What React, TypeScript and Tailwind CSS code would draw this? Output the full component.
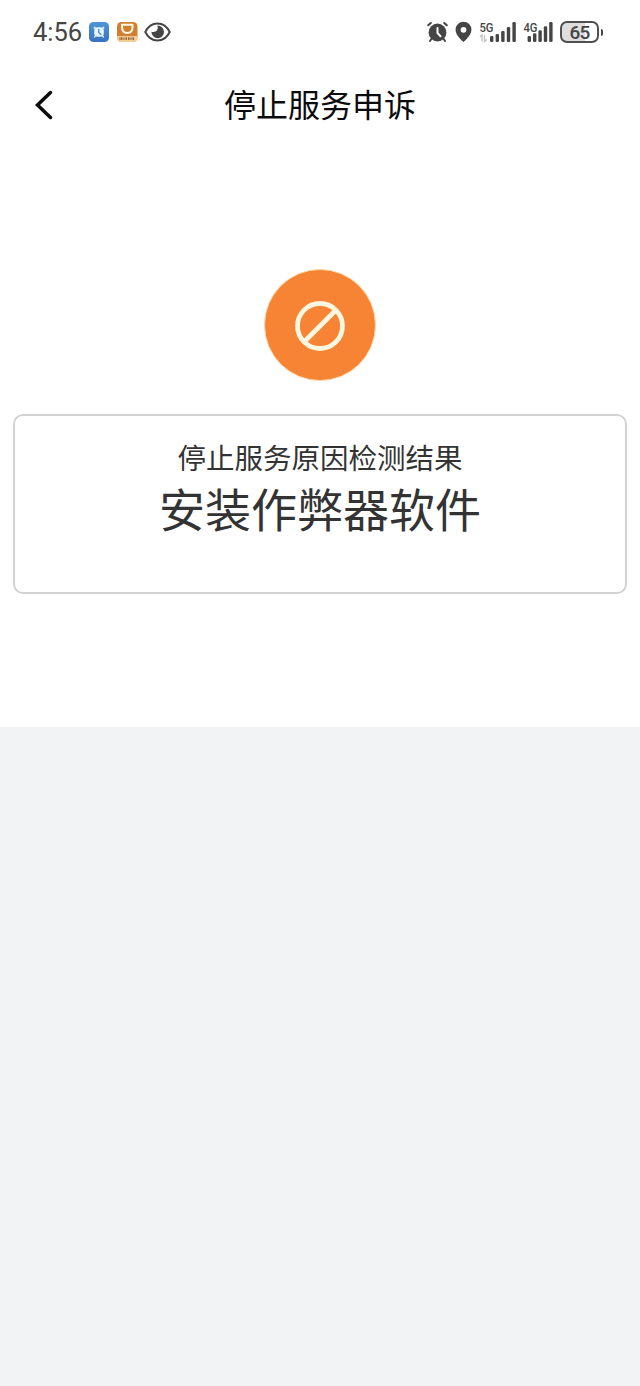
import type { ReactNode } from "react";

const bars5g = [
  { x: 11, y: 15 },
  { x: 16.6, y: 13 },
  { x: 22.2, y: 10 },
  { x: 27.8, y: 6 },
  { x: 33.4, y: 1 },
];

const bars4g = [
  { x: 4.6, y: 15 },
  { x: 10, y: 12.3 },
  { x: 15.4, y: 9.3 },
  { x: 20.8, y: 5.3 },
  { x: 26.2, y: 1 },
];

function Signal({
  label,
  bars,
  width,
  children,
}: {
  label: string;
  bars: { x: number; y: number }[];
  width: number;
  children?: ReactNode;
}) {
  return (
    <svg width={width} height="32" viewBox={`0 -5 ${width} 32`} fill="#454545">
      <text
        x="0.5"
        y="10.5"
        fontSize="13.5"
        fontWeight="500"
        textLength="14"
        lengthAdjust="spacingAndGlyphs"
      >
        {label}
      </text>
      {children}
      {bars.map((bar) => (
        <rect
          key={bar.x}
          x={bar.x}
          y={bar.y}
          width="3.4"
          height={21 - bar.y}
          rx="1.3"
        />
      ))}
    </svg>
  );
}

function ClockAppIcon() {
  return (
    <svg className="ml-[7px]" width="20" height="20" viewBox="0 0 20 20">
      <defs>
        <linearGradient id="clock" x1="0" y1="0" x2="0" y2="1">
          <stop offset="0" stopColor="#4f95d6" />
          <stop offset="1" stopColor="#3871c0" />
        </linearGradient>
      </defs>
      <rect width="20" height="20" rx="4.5" fill="url(#clock)" />
      <rect x="5.2" y="5.2" width="9.6" height="9.6" rx="3.5" fill="#e4f6fb" />
      <path
        d="M5.2 6 6 5.200M14 5.200l.8.8M6 14.600l-.5.500M14 14.600l.5.500"
        stroke="#e4f6fb"
        strokeWidth="1.4"
        strokeLinecap="round"
      />
      <path d="M9.8 7v3.500l2.500 2.200" fill="none" stroke="#4385ca" strokeWidth="1.3" />
    </svg>
  );
}

function CupAppIcon() {
  return (
    <svg className="ml-2" width="21" height="20" viewBox="0 0 21 20">
      <rect width="20.5" height="20" rx="4.5" fill="#d27f2e" />
      <path d="M0 14h20.500v1.500A4.500 4.500 0 0 1 16 20H4.500A4.500 4.500 0 0 1 0 15.500z" fill="#f3cd94" />
      <path
        d="M5 2.800h10.500V5c0 4.300-1.800 6-5.200 6S5 9.300 5 5z"
        fill="#d27f2e"
        stroke="#fff7e9"
        strokeWidth="2"
        strokeLinejoin="round"
      />
      <path
        d="M3 15.300v2.700M4.500 15.300v2.500M6 15.300v2.700M8 15.300v2.500M9.500 15.300v2.700M11.500 15.300v2.500M13 15.300v2.700M15 15.300v2.500M16.500 15.300v2.700"
        stroke="#8f5223"
        strokeWidth=".9"
      />
    </svg>
  );
}

function EyeIcon() {
  return (
    <svg className="ml-1.5" width="27" height="20" viewBox="0 0 27 20">
      <path
        d="M1.300 10C4 4.400 8.400 1.500 13.500 1.500S23 4.400 25.700 10C23 15.600 18.600 18.500 13.500 18.500S4 15.600 1.300 10z"
        fill="none"
        stroke="#454545"
        strokeWidth="2"
        strokeLinejoin="round"
      />
      <path
        d="M13.300 3.600c1.500 4-.8 7.300-5.900 6.200A6.300 6.300 0 1 0 13.300 3.600z"
        fill="#454545"
      />
    </svg>
  );
}

function AlarmIcon() {
  return (
    <svg width="21" height="22" viewBox="0 0 21 22">
      <circle cx="10.5" cy="11.5" r="8.9" fill="#454545" />
      <path
        d="M1.200 4.300 3.800 2M19.800 4.300 17.200 2M4.700 17.500 3 20M16.300 17.500 18 20"
        stroke="#454545"
        strokeWidth="2"
        strokeLinecap="round"
      />
      <path
        d="M10.500 7v5l3 3.200"
        fill="none"
        stroke="#fff"
        strokeWidth="2"
        strokeLinecap="round"
        strokeLinejoin="round"
      />
    </svg>
  );
}

function StatusBar() {
  return (
    <div className="flex h-16 items-center justify-between pl-[33px] pr-[37px] text-[#454545]">
      <div className="flex items-center">
        <span className="w-[49px] whitespace-nowrap pt-0.5 font-['Roboto',sans-serif] text-[25.5px] leading-none">
          4:56
        </span>
        <ClockAppIcon />
        <CupAppIcon />
        <EyeIcon />
      </div>
      <div className="flex items-center font-['Roboto',sans-serif]">
        <AlarmIcon />
        <svg className="mx-[7px]" width="17" height="22" viewBox="0 0 17 22">
          <path
            d="M8.500.800A7.900 7.900 0 0 0 .600 8.700C.600 13.200 4.500 17.500 8.500 21c4-3.500 7.900-7.800 7.900-12.300A7.900 7.900 0 0 0 8.500.800zm0 5.100a2.900 2.900 0 1 1 0 5.800 2.900 2.900 0 0 1 0-5.800z"
            fill="#454545"
          />
        </svg>
        <Signal label="5G" bars={bars5g} width={38}>
          <path
            d="M1 15.800 3 14v6.500M5.500 14v6.500L7.800 18.500"
            fill="none"
            stroke="#c2c2c2"
            strokeWidth="1.4"
          />
        </Signal>
        <div className="ml-[6px] mr-[7px]">
          <Signal label="4G" bars={bars4g} width={30} />
        </div>
        <div className="flex h-[22px] w-[39px] items-center justify-center rounded-[7px] border-2 border-[#505050] bg-[linear-gradient(to_right,#dedede_65%,#fff_65%)] text-[19px] font-medium leading-none tracking-[-0.8px]">
          65
        </div>
        <div className="ml-[2px] h-[7px] w-[2px] rounded-r bg-[#454545]" />
      </div>
    </div>
  );
}

export default function App() {
  return (
    <div className="flex h-[1386px] w-[640px] flex-col bg-[#f2f3f5] font-['Noto_Sans_CJK_SC',sans-serif]">
      <div className="h-[727px] bg-white">
        <StatusBar />
        <header className="grid h-20 grid-cols-[80px_1fr_80px] items-center">
          <svg className="ml-[34px]" width="20" height="32" viewBox="0 0 20 32">
            <path
              d="M16.500 4.500 3.500 17l13 12.500"
              fill="none"
              stroke="#0b0b0b"
              strokeWidth="3.5"
              strokeLinecap="round"
            />
          </svg>
          <h1 className="pb-0.5 text-center text-[32px] leading-10 text-[#0b0b0b]">停止服务申诉</h1>
        </header>

        <div className="mx-auto mt-[125px] flex size-[112px] items-center justify-center rounded-full border border-[#fbdcae] bg-[#f78434] pt-px">
          <svg width="50" height="50" viewBox="0 0 50 50" fill="none" stroke="#fff6df">
            <circle cx="25" cy="25" r="22.5" strokeWidth="4.8" />
            <path d="M9.500 40.500 40.500 9.500" strokeWidth="4.8" />
          </svg>
        </div>

        <section className="mx-[13px] mt-[33px] h-[180px] rounded-[10px] border-2 border-[#d2d2d2] pt-[21px] text-center text-[#333]">
          <p className="text-[28.5px] leading-10">停止服务原因检测结果</p>
          <p className="text-[46px] leading-[60px]">安装作弊器软件</p>
        </section>
      </div>
    </div>
  );
}
